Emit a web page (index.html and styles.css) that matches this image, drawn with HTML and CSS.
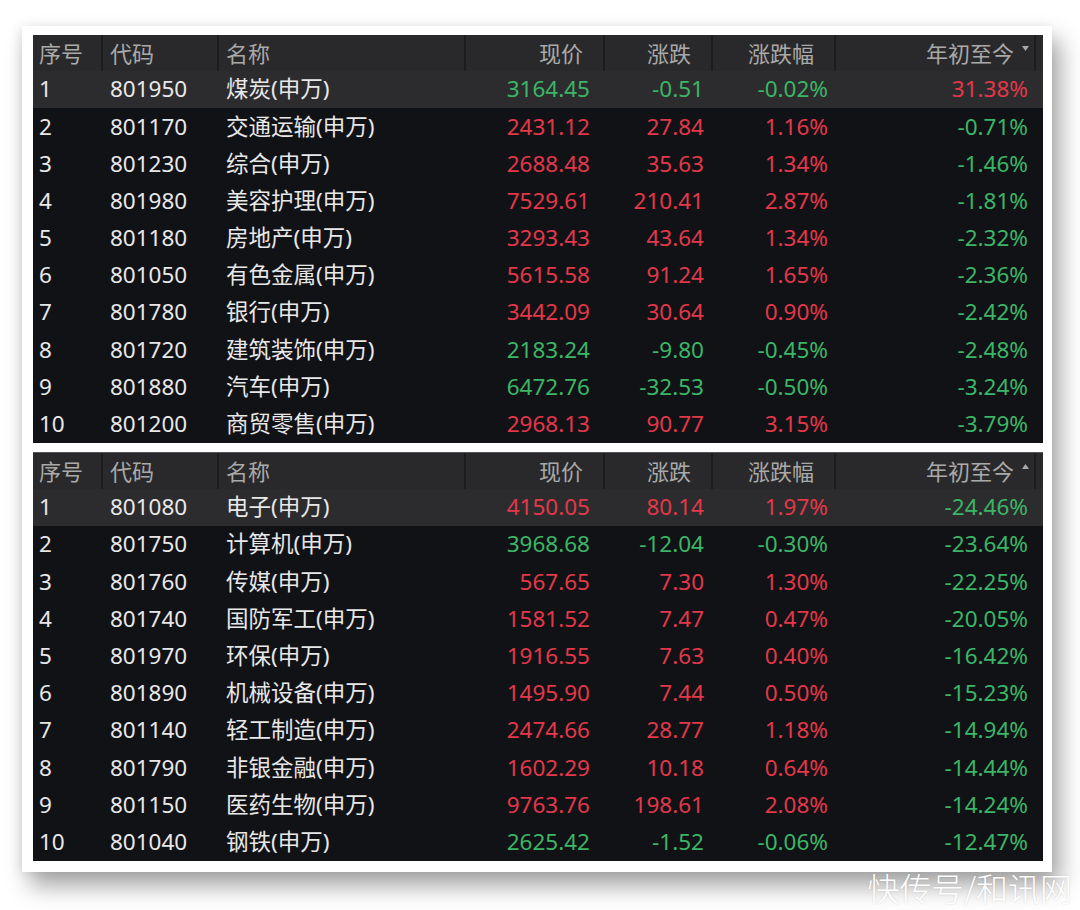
FILE: index.html
```html
<!DOCTYPE html>
<html lang="zh">
<head>
<meta charset="utf-8">
<title>申万行业</title>
<link rel="stylesheet" href="styles.css">
</head>
<body>
<div class="page">
  <div class="card">
    <div class="table">
      <div class="row head">
        <div class="c c1">序号</div><div class="c c2">代码</div><div class="c c3">名称</div><div class="c c4 r">现价</div><div class="c c5 r">涨跌</div><div class="c c6 r">涨跌幅</div><div class="c c7 r">年初至今<svg class="sort" width="7" height="5" viewBox="0 0 7 5"><path d="M0 0H7L3.5 5Z" fill="#a8a8a8"/></svg></div><div class="c c8"></div>
      </div>
      <div class="row sel"><div class="c c1">1</div><div class="c c2">801950</div><div class="c c3">煤炭(申万)</div><div class="c c4 r g">3164.45</div><div class="c c5 r g">-0.51</div><div class="c c6 r g">-0.02%</div><div class="c c7 r u">31.38%</div><div class="c c8"></div></div>
      <div class="row"><div class="c c1">2</div><div class="c c2">801170</div><div class="c c3">交通运输(申万)</div><div class="c c4 r u">2431.12</div><div class="c c5 r u">27.84</div><div class="c c6 r u">1.16%</div><div class="c c7 r g">-0.71%</div><div class="c c8"></div></div>
      <div class="row"><div class="c c1">3</div><div class="c c2">801230</div><div class="c c3">综合(申万)</div><div class="c c4 r u">2688.48</div><div class="c c5 r u">35.63</div><div class="c c6 r u">1.34%</div><div class="c c7 r g">-1.46%</div><div class="c c8"></div></div>
      <div class="row"><div class="c c1">4</div><div class="c c2">801980</div><div class="c c3">美容护理(申万)</div><div class="c c4 r u">7529.61</div><div class="c c5 r u">210.41</div><div class="c c6 r u">2.87%</div><div class="c c7 r g">-1.81%</div><div class="c c8"></div></div>
      <div class="row"><div class="c c1">5</div><div class="c c2">801180</div><div class="c c3">房地产(申万)</div><div class="c c4 r u">3293.43</div><div class="c c5 r u">43.64</div><div class="c c6 r u">1.34%</div><div class="c c7 r g">-2.32%</div><div class="c c8"></div></div>
      <div class="row"><div class="c c1">6</div><div class="c c2">801050</div><div class="c c3">有色金属(申万)</div><div class="c c4 r u">5615.58</div><div class="c c5 r u">91.24</div><div class="c c6 r u">1.65%</div><div class="c c7 r g">-2.36%</div><div class="c c8"></div></div>
      <div class="row"><div class="c c1">7</div><div class="c c2">801780</div><div class="c c3">银行(申万)</div><div class="c c4 r u">3442.09</div><div class="c c5 r u">30.64</div><div class="c c6 r u">0.90%</div><div class="c c7 r g">-2.42%</div><div class="c c8"></div></div>
      <div class="row"><div class="c c1">8</div><div class="c c2">801720</div><div class="c c3">建筑装饰(申万)</div><div class="c c4 r g">2183.24</div><div class="c c5 r g">-9.80</div><div class="c c6 r g">-0.45%</div><div class="c c7 r g">-2.48%</div><div class="c c8"></div></div>
      <div class="row"><div class="c c1">9</div><div class="c c2">801880</div><div class="c c3">汽车(申万)</div><div class="c c4 r g">6472.76</div><div class="c c5 r g">-32.53</div><div class="c c6 r g">-0.50%</div><div class="c c7 r g">-3.24%</div><div class="c c8"></div></div>
      <div class="row"><div class="c c1">10</div><div class="c c2">801200</div><div class="c c3">商贸零售(申万)</div><div class="c c4 r u">2968.13</div><div class="c c5 r u">90.77</div><div class="c c6 r u">3.15%</div><div class="c c7 r g">-3.79%</div><div class="c c8"></div></div>
    </div>

    <div class="table second">
      <div class="row head">
        <div class="c c1">序号</div><div class="c c2">代码</div><div class="c c3">名称</div><div class="c c4 r">现价</div><div class="c c5 r">涨跌</div><div class="c c6 r">涨跌幅</div><div class="c c7 r">年初至今<svg class="sort" width="7" height="5" viewBox="0 0 7 5"><path d="M0 5H7L3.5 0Z" fill="#a8a8a8"/></svg></div><div class="c c8"></div>
      </div>
      <div class="row sel"><div class="c c1">1</div><div class="c c2">801080</div><div class="c c3">电子(申万)</div><div class="c c4 r u">4150.05</div><div class="c c5 r u">80.14</div><div class="c c6 r u">1.97%</div><div class="c c7 r g">-24.46%</div><div class="c c8"></div></div>
      <div class="row"><div class="c c1">2</div><div class="c c2">801750</div><div class="c c3">计算机(申万)</div><div class="c c4 r g">3968.68</div><div class="c c5 r g">-12.04</div><div class="c c6 r g">-0.30%</div><div class="c c7 r g">-23.64%</div><div class="c c8"></div></div>
      <div class="row"><div class="c c1">3</div><div class="c c2">801760</div><div class="c c3">传媒(申万)</div><div class="c c4 r u">567.65</div><div class="c c5 r u">7.30</div><div class="c c6 r u">1.30%</div><div class="c c7 r g">-22.25%</div><div class="c c8"></div></div>
      <div class="row"><div class="c c1">4</div><div class="c c2">801740</div><div class="c c3">国防军工(申万)</div><div class="c c4 r u">1581.52</div><div class="c c5 r u">7.47</div><div class="c c6 r u">0.47%</div><div class="c c7 r g">-20.05%</div><div class="c c8"></div></div>
      <div class="row"><div class="c c1">5</div><div class="c c2">801970</div><div class="c c3">环保(申万)</div><div class="c c4 r u">1916.55</div><div class="c c5 r u">7.63</div><div class="c c6 r u">0.40%</div><div class="c c7 r g">-16.42%</div><div class="c c8"></div></div>
      <div class="row"><div class="c c1">6</div><div class="c c2">801890</div><div class="c c3">机械设备(申万)</div><div class="c c4 r u">1495.90</div><div class="c c5 r u">7.44</div><div class="c c6 r u">0.50%</div><div class="c c7 r g">-15.23%</div><div class="c c8"></div></div>
      <div class="row"><div class="c c1">7</div><div class="c c2">801140</div><div class="c c3">轻工制造(申万)</div><div class="c c4 r u">2474.66</div><div class="c c5 r u">28.77</div><div class="c c6 r u">1.18%</div><div class="c c7 r g">-14.94%</div><div class="c c8"></div></div>
      <div class="row"><div class="c c1">8</div><div class="c c2">801790</div><div class="c c3">非银金融(申万)</div><div class="c c4 r u">1602.29</div><div class="c c5 r u">10.18</div><div class="c c6 r u">0.64%</div><div class="c c7 r g">-14.44%</div><div class="c c8"></div></div>
      <div class="row"><div class="c c1">9</div><div class="c c2">801150</div><div class="c c3">医药生物(申万)</div><div class="c c4 r u">9763.76</div><div class="c c5 r u">198.61</div><div class="c c6 r u">2.08%</div><div class="c c7 r g">-14.24%</div><div class="c c8"></div></div>
      <div class="row"><div class="c c1">10</div><div class="c c2">801040</div><div class="c c3">钢铁(申万)</div><div class="c c4 r g">2625.42</div><div class="c c5 r g">-1.52</div><div class="c c6 r g">-0.06%</div><div class="c c7 r g">-12.47%</div><div class="c c8"></div></div>
    </div>
  </div>
  <div class="watermark">快传号/和讯网</div>
</div>
</body>
</html>
```

FILE: styles.css
```css
* { box-sizing: border-box; }
html, body { margin: 0; padding: 0; background: #ffffff; }
body {
  width: 1080px;
  height: 910px;
  overflow: hidden;
  font-family: "Noto Sans", "Noto Sans CJK SC", sans-serif;
}
.page {
  position: relative;
  padding: 26px 0 0 22px;
  height: 910px;
}
.card {
  width: 1030px;
  height: 846px;
  background: #ffffff;
  padding: 9px 9px 10px 11px;
  display: flex;
  flex-direction: column;
  gap: 9px;
  box-shadow: 8px 14px 22px rgba(0, 0, 0, 0.36), -3px 0 10px rgba(0, 0, 0, 0.08);
}
.table {
  width: 1010px;
  background: #111216;
  display: flex;
  flex-direction: column;
}
.row {
  display: grid;
  grid-template-columns: 70px 116px 247px 139px 108px 123px 200px 7px;
  height: 37.2px;
  align-items: center;
  font-size: 22.5px;
  color: #e8e8e8;
  line-height: 1;
}
.row.head {
  height: 36px;
  background: #29292b;
  color: #a9a9a9;
  font-size: 22px;
  align-items: stretch;
}
.second .row.head {
  height: 37px;
  border-top: 1px solid #555558;
}
.row.sel { background: #2c2c2e; }
.c {
  white-space: nowrap;
}
.head .c {
  display: flex;
  align-items: center;
  border-right: 2px solid #1c1c1d;
}
.head .c8 { border-right: none; }
.c1 { padding-left: 6px; }
.c2 { padding-left: 7px; }
.c3 { padding-left: 7px; }
.r { text-align: right; }
.head .r { justify-content: flex-end; }
.c4 { padding-right: 15px; }
.c5 { padding-right: 9px; }
.c6 { padding-right: 8px; }
.c7 { padding-right: 8px; }
.head .c4, .head .c5, .head .c6 { padding-right: 20px; }
.head .c7 { padding-right: 5px; }
.sort { align-self: flex-start; margin-top: 11px; margin-left: 8px; }
.g { color: #3cb566; }
.u { color: #e2384a; }
.watermark {
  position: absolute;
  right: 8px;
  top: 868px;
  font-family: "Noto Sans CJK SC", sans-serif;
  font-weight: 300;
  font-size: 32px;
  color: #ffffff;
  text-shadow: 0 0 2px rgba(0, 0, 0, 0.15);
  line-height: 1.2;
}
```
